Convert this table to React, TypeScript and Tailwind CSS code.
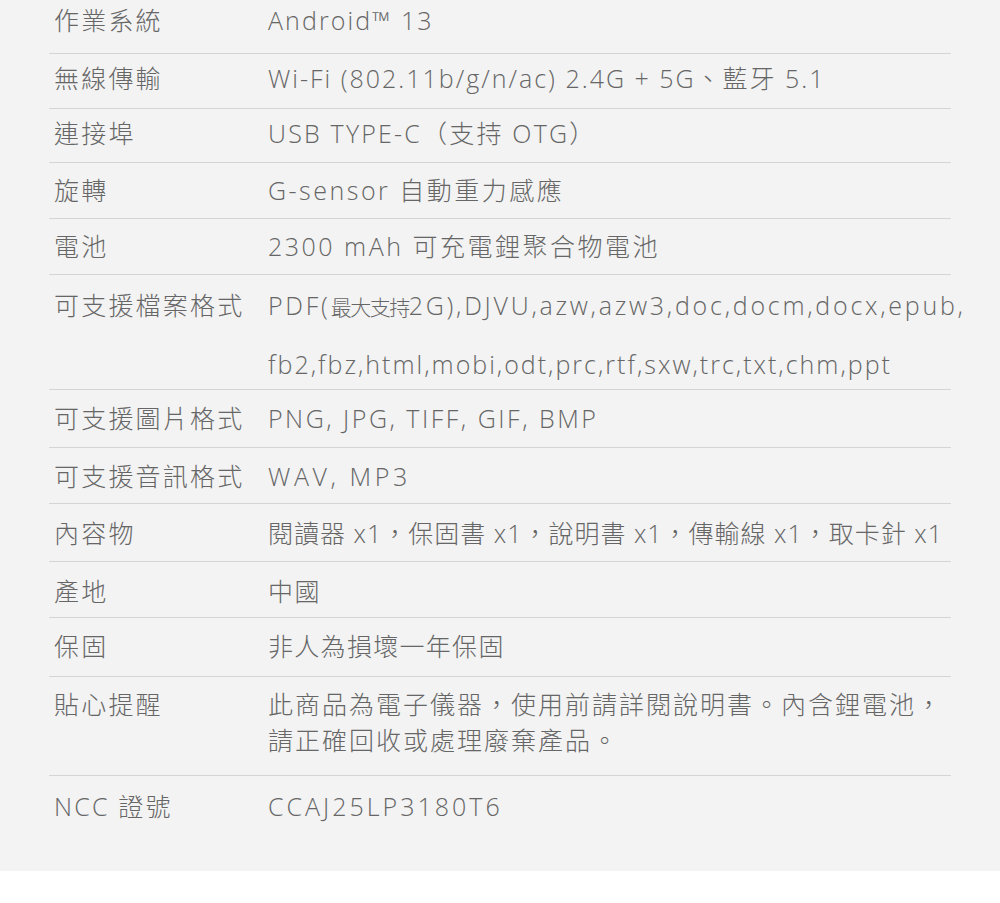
import React from "react";

type Row = {
  label: string;
  value: React.ReactNode;
  cls: string;
  lh: string;
  tr: string;
  last?: boolean;
};

const rows: Row[] = [
  { label: "作業系統", value: "Android™ 13", cls: "h-[54px] pt-[2px]", lh: "leading-[36px]", tr: "tracking-[2.1px]" },
  { label: "無線傳輸", value: "Wi-Fi (802.11b/g/n/ac) 2.4G + 5G、藍牙 5.1", cls: "h-[55px] pt-[6px]", lh: "leading-[36px]", tr: "tracking-[2px]" },
  { label: "連接埠", value: "USB TYPE-C（支持 OTG）", cls: "h-[54px] pt-[6px]", lh: "leading-[36px]", tr: "tracking-[2.2px]" },
  { label: "旋轉", value: "G-sensor 自動重力感應", cls: "h-[56px] pt-[9px]", lh: "leading-[36px]", tr: "tracking-[2.5px]" },
  { label: "電池", value: "2300 mAh 可充電鋰聚合物電池", cls: "h-[56px] pt-[9px]", lh: "leading-[36px]", tr: "tracking-[2.5px]" },
  {
    label: "可支援檔案格式",
    value: (
      <>
        <span className="tracking-[2.75px]">
          PDF(<span className="text-[21px] tracking-[-1.5px]">最大支持</span>2G),DJVU,azw,azw3,doc,docm,docx,epub,
        </span>
        <br />
        <span className="tracking-[2px]">fb2,fbz,html,mobi,odt,prc,rtf,sxw,trc,txt,chm,ppt</span>
      </>
    ),
    cls: "h-[115px] pt-[2px]",
    lh: "leading-[57px]",
    tr: "tracking-[2px]",
  },
  { label: "可支援圖片格式", value: "PNG, JPG, TIFF, GIF, BMP", cls: "h-[58px] pt-[10px]", lh: "leading-[36px]", tr: "tracking-[2.5px]" },
  { label: "可支援音訊格式", value: "WAV, MP3", cls: "h-[56px] pt-[10px]", lh: "leading-[36px]", tr: "tracking-[3.6px]" },
  { label: "內容物", value: "閱讀器 x1，保固書 x1，說明書 x1，傳輸線 x1，取卡針 x1", cls: "h-[58px] pt-[11px]", lh: "leading-[36px]", tr: "tracking-[1px]" },
  { label: "產地", value: "中國", cls: "h-[56px] pt-[11px]", lh: "leading-[36px]", tr: "tracking-[1.5px]" },
  { label: "保固", value: "非人為損壞一年保固", cls: "h-[59px] pt-[10px]", lh: "leading-[36px]", tr: "tracking-[1.3px]" },
  {
    label: "貼心提醒",
    value: (
      <>
        此商品為電子儀器，使用前請詳閱說明書。內含鋰電池，
        <br />
        請正確回收或處理廢棄產品。
      </>
    ),
    cls: "h-[99px] pt-[9px]",
    lh: "leading-[36px]",
    tr: "tracking-[2px]",
  },
  { label: "NCC 證號", value: "CCAJ25LP3180T6", cls: "h-[95px] pt-[12px]", lh: "leading-[36px]", tr: "tracking-[3px]", last: true },
];

export default function App() {
  return (
    <div
      className="min-h-[903px] bg-white text-[25px] font-light text-[#666666]"
      style={{ fontFamily: '"Open Sans", "Noto Sans CJK TC", sans-serif' }}
    >
      <div className="h-[871px] bg-[#f3f3f3] px-[49px]">
        {rows.map((r, i) => (
          <div
            key={i}
            className={`grid grid-cols-[219px_1fr] items-start ${r.cls} ${
              r.last ? "" : "border-b border-[#d4d4d4]"
            }`}
          >
            <div className={`pl-[5px] whitespace-nowrap tracking-[2.2px] ${r.lh}`}>{r.label}</div>
            <div className={`whitespace-nowrap ${r.tr} ${r.lh}`}>{r.value}</div>
          </div>
        ))}
      </div>
    </div>
  );
}
